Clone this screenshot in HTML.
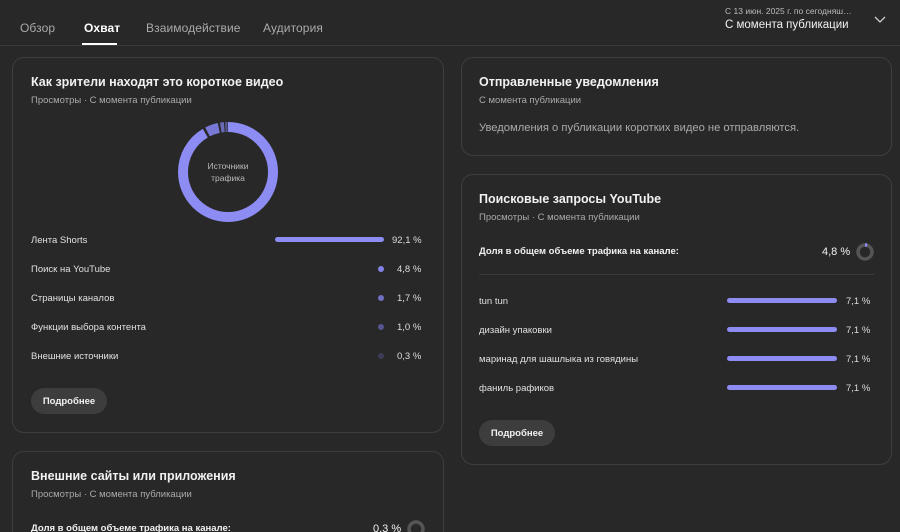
<!DOCTYPE html>
<html style="overflow:hidden"><head><meta charset="utf-8"><style>
*{margin:0;padding:0;box-sizing:border-box}
html,body{width:900px;height:532px;overflow:hidden}
body{background:#282828;font-family:"Liberation Sans",sans-serif;color:#f1f1f1;position:relative}
.a{position:absolute;white-space:nowrap}
.card{position:absolute;border:1px solid #3e3e3e;border-radius:12px;background:#282828}
.t{font-size:12.5px;font-weight:bold;color:#f1f1f1}
.s{font-size:9.5px;color:#aaa}
.tab{font-size:12px;color:#aaa;top:21px;letter-spacing:0.1px}
.r{font-size:9.5px;color:#e0e0e0}
.v{font-size:9.5px;color:#ddd}
.btn{position:absolute;background:#3d3d3d;border-radius:14px;height:26px;font-size:9.5px;font-weight:bold;color:#f1f1f1;text-align:center;line-height:27px}
.bar{position:absolute;height:5px;border-radius:3px;background:#8c8cf3}
.dot{position:absolute;width:6px;height:6px;border-radius:3px}
</style></head><body>
<div class="a tab" style="left:20px">Обзор</div>
<div class="a tab" style="left:84px;color:#fff;font-weight:bold">Охват</div>
<div style="position:absolute;left:82px;top:43px;width:35px;height:2px;background:#fff"></div>
<div class="a tab" style="left:146px">Взаимодействие</div>
<div class="a tab" style="left:263px">Аудитория</div>
<div class="a" style="left:725px;top:6px;font-size:8.5px;color:#bbb">С 13 июн. 2025 г. по сегодняш…</div>
<div class="a" style="left:725px;top:19px;font-size:11.5px;color:#f1f1f1">С момента публикации</div>
<svg class="a" style="left:874px;top:15px" width="12" height="10"><path d="M1 2 L6 7 L11 2" stroke="#ccc" stroke-width="1.3" fill="none"/></svg>
<div style="position:absolute;left:0;top:45px;width:900px;height:1px;background:#3a3a3a"></div>

<div class="card" style="left:12px;top:57px;width:432px;height:376px"></div>
<div class="a t" style="left:31px;top:75px">Как зрители находят это короткое видео</div>
<div class="a s" style="left:31px;top:95px">Просмотры · С момента публикации</div>
<svg class="a" style="left:178px;top:122px" width="100" height="100" viewBox="0 0 100 100">
<g transform="rotate(-90 50 50)" fill="none" stroke-width="10">
<circle cx="50" cy="50" r="45" stroke="#8c8cf3" stroke-dasharray="258.5 1000" stroke-dashoffset="0"/>
<circle cx="50" cy="50" r="45" stroke="#7878d6" stroke-dasharray="12 1000" stroke-dashoffset="-261"/>
<circle cx="50" cy="50" r="45" stroke="#6a6ab8" stroke-dasharray="3.5 1000" stroke-dashoffset="-275"/>
<circle cx="50" cy="50" r="45" stroke="#55558f" stroke-dasharray="2 1000" stroke-dashoffset="-279.5"/>
<circle cx="50" cy="50" r="45" stroke="#404060" stroke-dasharray="1 1000" stroke-dashoffset="-281.5"/>
</g></svg>
<div class="a" style="left:198px;top:160px;width:60px;text-align:center;font-size:8.5px;color:#bbb;line-height:12px;white-space:normal">Источники трафика</div>
<div class="a r" style="left:31px;top:235px">Лента Shorts</div>
<div class="bar" style="left:275px;top:237px;width:109px"></div><div class="a v" style="left:392px;top:235px">92,1 %</div>
<div class="a r" style="left:31px;top:264px">Поиск на YouTube</div>
<div class="dot" style="left:378px;top:266px;background:#8282e6"></div><div class="a v" style="left:397px;top:264px">4,8 %</div>
<div class="a r" style="left:31px;top:293px">Страницы каналов</div>
<div class="dot" style="left:378px;top:295px;background:#7070c0"></div><div class="a v" style="left:397px;top:293px">1,7 %</div>
<div class="a r" style="left:31px;top:322px">Функции выбора контента</div>
<div class="dot" style="left:378px;top:324px;background:#55558f"></div><div class="a v" style="left:397px;top:322px">1,0 %</div>
<div class="a r" style="left:31px;top:351px">Внешние источники</div>
<div class="dot" style="left:378px;top:353px;background:#3c3c58"></div><div class="a v" style="left:397px;top:351px">0,3 %</div>
<div class="btn" style="left:31px;top:388px;width:76px">Подробнее</div>

<div class="card" style="left:12px;top:451px;width:432px;height:100px"></div>
<div class="a t" style="left:31px;top:469px">Внешние сайты или приложения</div>
<div class="a s" style="left:31px;top:489px">Просмотры · С момента публикации</div>
<div class="a" style="left:31px;top:523px;font-size:9.5px;font-weight:bold">Доля в общем объеме трафика на канале:</div>
<div class="a" style="left:373px;top:523px;font-size:11px">0,3 %</div>
<svg class="a" style="left:407px;top:520px" width="18" height="18"><circle cx="9" cy="9" r="7" stroke="#555" stroke-width="3.5" fill="none"/></svg>

<div class="card" style="left:461px;top:57px;width:431px;height:99px"></div>
<div class="a t" style="left:479px;top:75px">Отправленные уведомления</div>
<div class="a s" style="left:479px;top:95px">С момента публикации</div>
<div class="a" style="left:479px;top:122px;font-size:11.2px;color:#aaa">Уведомления о публикации коротких видео не отправляются.</div>

<div class="card" style="left:461px;top:174px;width:431px;height:291px"></div>
<div class="a t" style="left:479px;top:192px">Поисковые запросы YouTube</div>
<div class="a s" style="left:479px;top:212px">Просмотры · С момента публикации</div>
<div class="a" style="left:479px;top:246px;font-size:9.5px;font-weight:bold">Доля в общем объеме трафика на канале:</div>
<div class="a" style="left:822px;top:246px;font-size:11px">4,8 %</div>
<svg class="a" style="left:856px;top:243px" width="18" height="18"><circle cx="9" cy="9" r="7" stroke="#555" stroke-width="3.5" fill="none"/><circle cx="9" cy="9" r="7" stroke="#8c8cf3" stroke-width="3.5" fill="none" stroke-dasharray="2.1 100" transform="rotate(-90 9 9)"/></svg>
<div style="position:absolute;left:479px;top:274px;width:395px;height:1px;background:#3a3a3a"></div>
<div class="a r" style="left:479px;top:296px">tun tun</div>
<div class="bar" style="left:727px;top:298px;width:110px"></div><div class="a v" style="left:846px;top:296px">7,1 %</div>
<div class="a r" style="left:479px;top:325px">дизайн упаковки</div>
<div class="bar" style="left:727px;top:327px;width:110px"></div><div class="a v" style="left:846px;top:325px">7,1 %</div>
<div class="a r" style="left:479px;top:354px">маринад для шашлыка из говядины</div>
<div class="bar" style="left:727px;top:356px;width:110px"></div><div class="a v" style="left:846px;top:354px">7,1 %</div>
<div class="a r" style="left:479px;top:383px">фаниль рафиков</div>
<div class="bar" style="left:727px;top:385px;width:110px"></div><div class="a v" style="left:846px;top:383px">7,1 %</div>
<div class="btn" style="left:479px;top:420px;width:76px">Подробнее</div>
</body></html>
